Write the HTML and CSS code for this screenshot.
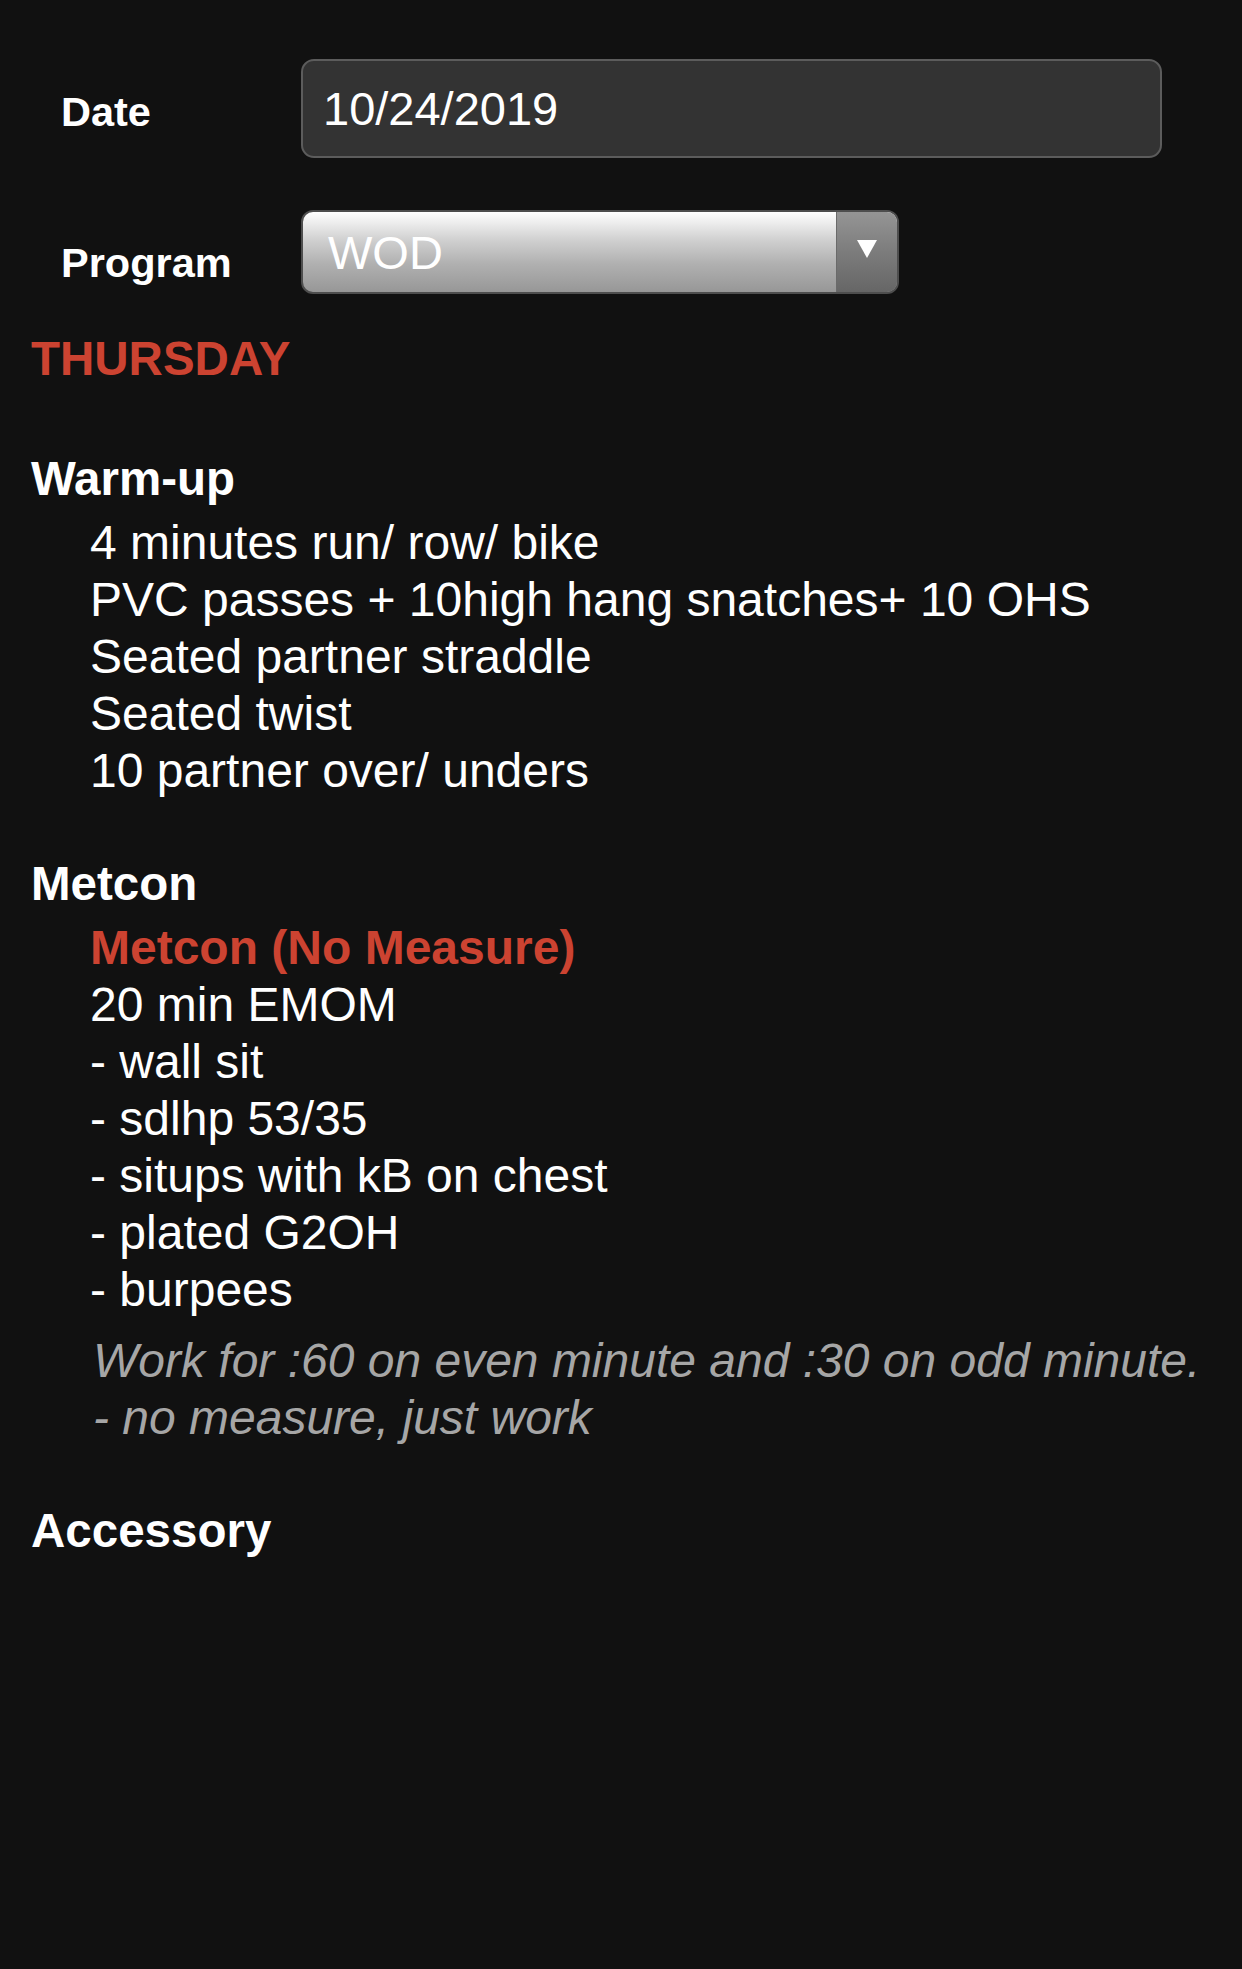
FILE: index.html
```html
<!DOCTYPE html>
<html lang="en">
<head>
<meta charset="utf-8">
<title>Workout</title>
<link rel="stylesheet" href="styles.css">
</head>
<body>
<div class="page">
  <div class="form">
    <div class="row">
      <div class="label">Date</div>
      <div class="input">10/24/2019</div>
    </div>
    <div class="row">
      <div class="label">Program</div>
      <div class="select">
        <span class="select-value">WOD</span>
        <span class="select-arrow"><span class="tri"></span></span>
      </div>
    </div>
  </div>

  <h1 class="day">THURSDAY</h1>

  <section class="block">
    <h2 class="block-title">Warm-up</h2>
    <div class="block-body">
      <div class="line">4 minutes run/ row/ bike</div>
      <div class="line">PVC passes + 10high hang snatches+ 10 OHS</div>
      <div class="line">Seated partner straddle</div>
      <div class="line">Seated twist</div>
      <div class="line">10 partner over/ unders</div>
    </div>
  </section>

  <section class="block">
    <h2 class="block-title">Metcon</h2>
    <div class="block-body">
      <div class="line sub">Metcon (No Measure)</div>
      <div class="line">20 min EMOM</div>
      <div class="line">- wall sit</div>
      <div class="line">- sdlhp 53/35</div>
      <div class="line">- situps with kB on chest</div>
      <div class="line">- plated G2OH</div>
      <div class="line">- burpees</div>
      <div class="note">
        <div class="line">Work for :60 on even minute and :30 on odd minute.</div>
        <div class="line">- no measure, just work</div>
      </div>
    </div>
  </section>

  <section class="block">
    <h2 class="block-title">Accessory</h2>
  </section>
</div>
</body>
</html>
```

FILE: styles.css
```css
html, body {
  margin: 0;
  padding: 0;
  background: #111111;
}

body {
  font-family: "Liberation Sans", Arial, Helvetica, sans-serif;
  color: #ffffff;
  min-height: 1969px;
}

.page {
  padding: 59px 0 0 31px;
}

.form {
  display: flex;
  flex-direction: column;
  gap: 52px;
  padding-left: 30px;
}

.row {
  display: flex;
  align-items: flex-start;
}

.label {
  width: 240px;
  flex: none;
  padding-top: 28px;
  font-size: 41.5px;
  line-height: 50px;
  font-weight: bold;
  color: #ffffff;
}

.input {
  box-sizing: border-box;
  width: 861px;
  height: 99px;
  border: 2px solid #5c5c5c;
  border-radius: 13px;
  background: #333333;
  padding-left: 20px;
  display: flex;
  align-items: center;
  font-size: 47px;
  color: #ffffff;
}

.select {
  box-sizing: border-box;
  width: 598px;
  height: 84px;
  border: 2px solid #4e4e4e;
  border-radius: 12px;
  overflow: hidden;
  display: flex;
  background: linear-gradient(#ffffff 0%, #d0d0d0 35%, #b0b0b0 65%, #979797 100%);
}

.select-value {
  flex: 1;
  display: flex;
  align-items: center;
  padding-left: 25px;
  font-size: 47px;
  color: #ffffff;
}

.select-arrow {
  width: 60px;
  flex: none;
  border-left: 1px solid #6a6a6a;
  background: linear-gradient(#959595 0%, #7c7c7c 50%, #666666 100%);
  display: flex;
  align-items: center;
  justify-content: center;
}

.tri {
  width: 0;
  height: 0;
  border-left: 10px solid transparent;
  border-right: 10px solid transparent;
  border-top: 18px solid #ffffff;
  margin-top: -6px;
}

.day {
  margin: 36px 0 0 0;
  font-size: 47.5px;
  line-height: 57px;
  font-weight: bold;
  color: #cc4331;
}

.block {
  margin-top: 56px;
}

.day + .block {
  margin-top: 63px;
}

.block-title {
  margin: 0;
  font-size: 47.5px;
  line-height: 57px;
  font-weight: bold;
  color: #ffffff;
}

.block-body {
  padding-left: 59px;
  margin-top: 7px;
}

.line {
  font-size: 48px;
  line-height: 57px;
  white-space: nowrap;
}

.sub {
  font-weight: bold;
  color: #cc4331;
}

.note {
  margin-top: 14px;
  padding-left: 3px;
  font-style: italic;
  color: #a6a6a6;
}
```
